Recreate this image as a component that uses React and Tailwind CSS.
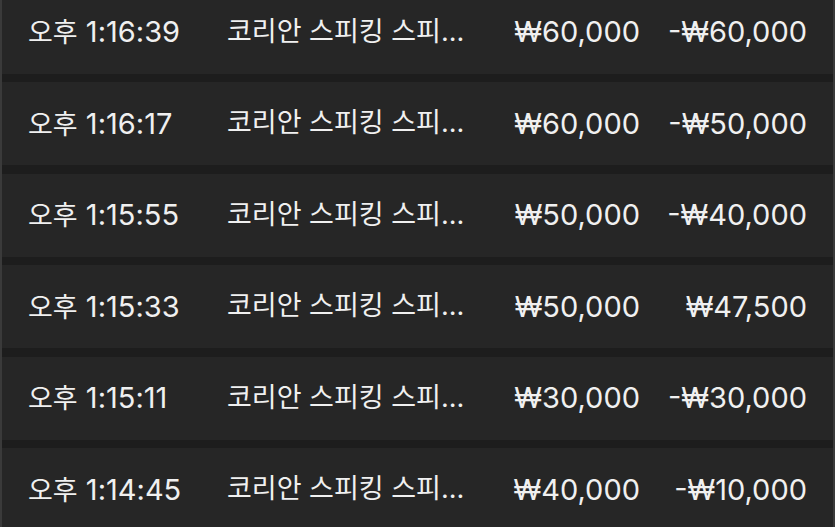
const rows = [
  { time: "1:16:39", name: "코리안 스피킹 스피...", price: "₩60,000", amount: "-₩60,000" },
  { time: "1:16:17", name: "코리안 스피킹 스피...", price: "₩60,000", amount: "-₩50,000" },
  { time: "1:15:55", name: "코리안 스피킹 스피...", price: "₩50,000", amount: "-₩40,000" },
  { time: "1:15:33", name: "코리안 스피킹 스피...", price: "₩50,000", amount: "₩47,500" },
  { time: "1:15:11", name: "코리안 스피킹 스피...", price: "₩30,000", amount: "-₩30,000" },
  { time: "1:14:45", name: "코리안 스피킹 스피...", price: "₩40,000", amount: "-₩10,000" },
];

export default function App() {
  return (
    <div
      className="h-[527px] w-[835px] overflow-hidden bg-[#1d1d1d] border-x-2 border-[#3a3a3a] text-[#f0f0f0]"
      style={{ fontFamily: 'Inter, "Noto Sans CJK KR", sans-serif' }}
    >
      {/* list, scrolled a little past the first row's top */}
      <div className="-mt-[9.5px] flex flex-col gap-[8.5px]">
        {rows.map((row) => (
          <div
            key={row.time}
            className="flex h-[83px] shrink-0 items-center bg-[#262626] pl-[26px] pr-[26px] text-[29px] whitespace-nowrap"
          >
            <span className="w-[199px] shrink-0">
              <span className="text-[27px]">오후</span> {row.time}
            </span>
            <span className="w-[240px] shrink-0 text-[27px]">{row.name}</span>
            <span className="w-[173px] shrink-0 text-right">{row.price}</span>
            <span className="flex-1 text-right">{row.amount}</span>
          </div>
        ))}
      </div>
    </div>
  );
}
